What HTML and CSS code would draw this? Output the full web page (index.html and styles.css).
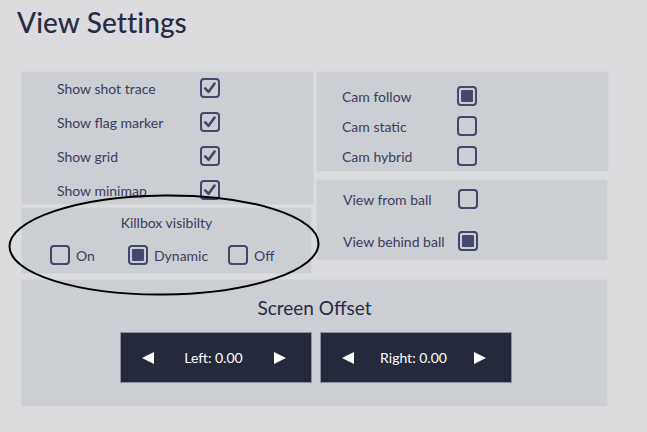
FILE: index.html
```html
<!DOCTYPE html>
<html>
<head>
<meta charset="utf-8">
<link rel="stylesheet" href="styles.css">
</head>
<body>
<div class="page">
  <h1 class="title">View Settings</h1>
  <div class="grid">
    <div class="col left">
      <div class="panel toggles">
        <div class="row"><span class="lbl">Show shot trace</span><span class="box"><svg viewBox="0 0 16 16"><path d="M3.2 8.4 L6.6 11.8 L12.6 3.6"/></svg></span></div>
        <div class="row"><span class="lbl">Show flag marker</span><span class="box"><svg viewBox="0 0 16 16"><path d="M3.2 8.4 L6.6 11.8 L12.6 3.6"/></svg></span></div>
        <div class="row"><span class="lbl">Show grid</span><span class="box"><svg viewBox="0 0 16 16"><path d="M3.2 8.4 L6.6 11.8 L12.6 3.6"/></svg></span></div>
        <div class="row"><span class="lbl">Show minimap</span><span class="box"><svg viewBox="0 0 16 16"><path d="M3.2 8.4 L6.6 11.8 L12.6 3.6"/></svg></span></div>
      </div>
      <div class="panel killbox">
        <div class="kb-title">Killbox visibilty</div>
        <div class="kb-opts">
          <div class="opt o1"><span class="box"></span><span class="lbl">On</span></div>
          <div class="opt o2"><span class="box filled"></span><span class="lbl">Dynamic</span></div>
          <div class="opt o3"><span class="box"></span><span class="lbl">Off</span></div>
        </div>
      </div>
    </div>
    <div class="col right">
      <div class="panel cams">
        <div class="rrow"><span class="lbl">Cam follow</span><span class="box filled"></span></div>
        <div class="rrow"><span class="lbl">Cam static</span><span class="box"></span></div>
        <div class="rrow"><span class="lbl">Cam hybrid</span><span class="box"></span></div>
      </div>
      <div class="panel views">
        <div class="vrow"><span class="lbl">View from ball</span><span class="box"></span></div>
        <div class="vrow"><span class="lbl">View behind ball</span><span class="box filled"></span></div>
      </div>
    </div>
  </div>
  <div class="panel offset">
    <div class="off-title">Screen Offset</div>
    <div class="btns">
      <div class="btn"><span class="tri tl"></span><span class="btxt">Left: 0.00</span><span class="tri tr"></span></div>
      <div class="btn"><span class="tri tl"></span><span class="btxt">Right: 0.00</span><span class="tri tr"></span></div>
    </div>
  </div>
  <svg class="ellipse" viewBox="0 0 320 110" width="320" height="110"><ellipse cx="164" cy="55" rx="154.5" ry="49.5" transform="rotate(-0.6 164 55)"/></svg>
</div>
</body>
</html>
```
FILE: styles.css
```css
html, body { margin: 0; padding: 0; }
body {
  background: #dcdcde;
  width: 647px;
  height: 432px;
  overflow: hidden;
  font-family: "Lato", "Noto Sans", sans-serif;
  color: #3b3d5c;
}
.page {
  position: relative;
  padding: 0 0 0 21px;
}
.title {
  margin: 0;
  height: 71px;
  margin-left: -4px;
  padding-top: 5px;
  box-sizing: border-box;
  font-size: 28px;
  font-weight: 500;
  color: #282b48;
  letter-spacing: 0.1px;
}
.grid {
  display: flex;
  gap: 2px;
  width: 588px;
}
.col { display: flex; flex-direction: column; }
.left { width: 293px; gap: 2px; }
.right { width: 293px; gap: 7px; }
.panel {
  background: #cbced3;
  box-shadow: inset 0 0 0 1px #d5d7db;
}
.toggles {
  height: 134px;
  padding: 0 0 0 36px;
  box-sizing: border-box;
}
.row {
  display: flex;
  align-items: center;
  height: 34px;
}
.row .lbl { width: 143px; }
.lbl { font-size: 14px; color: #3b3d5c; }
.box {
  width: 20px;
  height: 20px;
  box-sizing: border-box;
  border: 2px solid #44466a;
  border-radius: 4px;
  display: inline-flex;
  flex: none;
  position: relative;
}
.box svg { width: 16px; height: 16px; }
.box svg path {
  fill: none;
  stroke: #44466a;
  stroke-width: 2.6;
  stroke-linecap: round;
  stroke-linejoin: round;
}
.box.filled::after {
  content: "";
  position: absolute;
  left: 2px; top: 2px; right: 2px; bottom: 2px;
  background: #46496f;
  border-radius: 1px;
}
.killbox {
  width: 291px;
  height: 67px;
  box-sizing: border-box;
  padding-top: 7px;
}
.kb-title {
  text-align: center;
  font-size: 14px;
  height: 22px;
  line-height: 18px;
}
.kb-opts {
  display: flex;
  padding-left: 29px;
  margin-top: 9px;
}
.opt { display: flex; align-items: center; gap: 6px; }
.o1 { width: 78px; }
.o2 { width: 100px; }
.cams {
  height: 101px;
  padding: 10px 0 0 26px;
  box-sizing: border-box;
}
.rrow { display: flex; align-items: center; height: 30px; }
.rrow .lbl { width: 115px; }
.views {
  height: 82px;
  padding: 9px 0 0 27px;
  box-sizing: border-box;
  width: 292px;
}
.vrow { display: flex; align-items: center; height: 22px; }
.vrow + .vrow { margin-top: 20px; }
.vrow .lbl { width: 115px; }
.offset {
  margin-top: 5px;
  width: 587px;
  height: 128px;
  box-sizing: border-box;
  padding-top: 17px;
}
.off-title {
  text-align: center;
  font-size: 19px;
  color: #282b48;
  height: 37px;
  line-height: 24px;
}
.btns {
  display: flex;
  justify-content: center;
  gap: 10px;
  margin-left: 2px;
}
.btn {
  width: 190px;
  height: 49px;
  background: #242a3b;
  box-shadow: 0 0 0 1px #8b919c;
  display: flex;
  align-items: center;
  padding: 0 25px 0 21px;
  box-sizing: border-box;
  color: #ffffff;
}
.btxt { flex: 1; text-align: center; font-size: 14px; }
.tri { width: 0; height: 0; border-top: 6.5px solid transparent; border-bottom: 6.5px solid transparent; }
.tl { border-right: 12px solid #fff; }
.tr { border-left: 12px solid #fff; }
.ellipse {
  position: absolute;
  left: 0;
  top: 190px;
  overflow: visible;
}
.ellipse ellipse { fill: none; stroke: #000; stroke-width: 2; }
```
